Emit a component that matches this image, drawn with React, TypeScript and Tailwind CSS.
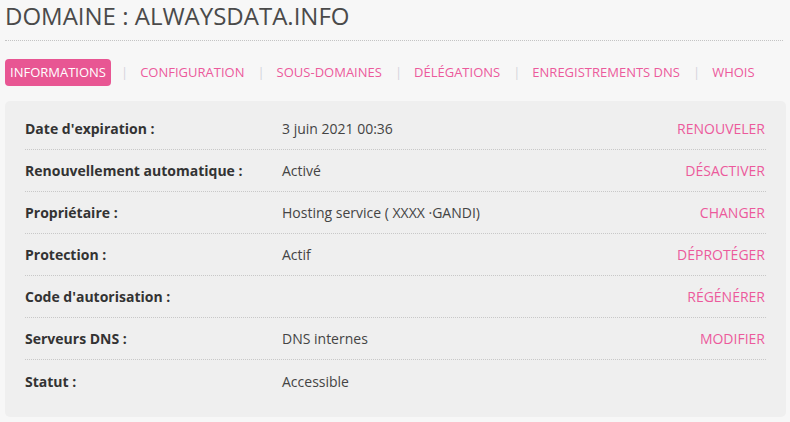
const TABS = ['Informations', 'Configuration', 'Sous-domaines', 'Délégations', 'Enregistrements DNS', 'Whois'];

const ROWS: { label: string; value: string; action?: string }[] = [
  { label: "Date d'expiration :", value: '3 juin 2021 00:36', action: 'Renouveler' },
  { label: 'Renouvellement automatique :', value: 'Activé', action: 'Désactiver' },
  { label: 'Propriétaire :', value: 'Hosting service ( XXXX ·GANDI)', action: 'Changer' },
  { label: 'Protection :', value: 'Actif', action: 'Déprotéger' },
  { label: "Code d'autorisation :", value: '', action: 'Régénérer' },
  { label: 'Serveurs DNS :', value: 'DNS internes', action: 'Modifier' },
  { label: 'Statut :', value: 'Accessible' },
];

export default function App() {
  return (
    <div className="w-[790px] h-[422px] overflow-hidden bg-[#f7f7f7] text-[#444] font-['Open_Sans',sans-serif]">
      {/* Title */}
      <div className="px-[5px] pt-[1px]">
        <h1 className="text-[24px] leading-[30px] uppercase text-[#4a4a4a]">Domaine : alwaysdata.info</h1>
        <div className="mt-[9px] mr-[2px] border-t border-dotted border-[#c4c4c4]" />
      </div>

      {/* Tabs */}
      <nav className="flex items-center h-[27px] px-[5px] mt-[18px] text-[13px] uppercase whitespace-nowrap">
        {TABS.map((t, i) => (
          <div key={t} className="flex items-center shrink-0">
            {i > 0 && <span className="text-[#d4d4dc] pl-[10px] pr-[9px]">|</span>}
            {i === 0 ? (
              <span className="rounded-[4px] bg-[#e85693] text-white px-[5px] h-[27px] leading-[27px]">{t}</span>
            ) : (
              <span className="text-[#ec5a9c] px-[3px]">{t}</span>
            )}
          </div>
        ))}
      </nav>

      {/* Panel */}
      <div className="mx-[5px] mt-[15px] w-[781px] rounded-[5px] bg-[#efefef] pt-[7px] pb-[15px] px-[20px] text-[14px]">
        {ROWS.map((r, i) => (
          <div
            key={r.label}
            className={`flex items-center h-[42px] ${i < ROWS.length - 1 ? 'border-b border-dotted border-[#c8c8c8]' : ''}`}
          >
            <span className="w-[257px] font-bold text-[#333]">{r.label}</span>
            <span className="flex-1 text-[#444]">{r.value}</span>
            {r.action && <span className="uppercase text-[#ec5a9c] pr-[1px]">{r.action}</span>}
          </div>
        ))}
      </div>
    </div>
  );
}
